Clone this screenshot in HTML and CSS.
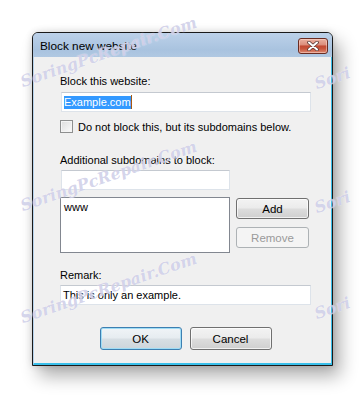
FILE: index.html
```html
<!DOCTYPE html>
<html>
<head>
<meta charset="utf-8">
<link rel="stylesheet" href="styles.css">
</head>
<body>
<div class="stage">
  <div class="window">
    <div class="titlebar">
      <span class="title">Block new website</span>
      <div class="close">
        <svg width="12" height="10" viewBox="0 0 12 10">
          <path d="M2 1.5 L10 8.5 M10 1.5 L2 8.5" stroke="#5a3a36" stroke-width="3.6" stroke-linecap="round"/>
          <path d="M2 1.5 L10 8.5 M10 1.5 L2 8.5" stroke="#ffffff" stroke-width="2" stroke-linecap="round"/>
        </svg>
      </div>
    </div>
    <div class="client">
      <div class="label l1">Block this website:</div>
      <div class="input in1"><span class="sel">Example.com</span><span class="caret"></span></div>
      <div class="checkrow">
        <span class="checkbox"></span>
        <span>Do not block this, but its subdomains below.</span>
      </div>
      <div class="label l2">Additional subdomains to block:</div>
      <div class="input in2"></div>
      <div class="listrow">
        <div class="listbox">www</div>
        <div class="sidebtns">
          <div class="btn side">Add</div>
          <div class="btn side disabled">Remove</div>
        </div>
      </div>
      <div class="label l3">Remark:</div>
      <div class="input in3">This is only an example.</div>
      <div class="footer">
        <div class="btn main default">OK</div>
        <div class="btn main">Cancel</div>
      </div>
    </div>
  </div>
  <span class="wm wm1">SoringPcRepair.Com</span>
  <span class="wm wm2">SoringPcRepair.Com</span>
  <span class="wm wm3">SoringPcRepair.Com</span>
  <span class="wm wm4">Sori</span>
  <span class="wm wm5">Sori</span>
  <span class="wm wm6">Sori</span>
</div>
</body>
</html>
```
FILE: styles.css
```css
* { box-sizing: border-box; }
html, body { margin: 0; padding: 0; background: #ffffff; }
body {
  width: 364px;
  height: 399px;
  overflow: hidden;
  font-family: "Liberation Sans", Arial, sans-serif;
  font-size: 11px;
  color: #000;
}
.stage {
  position: relative;
  width: 364px;
  height: 399px;
  padding: 32px 0 0 32px;
}
.window {
  width: 301px;
  height: 334px;
  border: 1px solid #1a1a1a;
  border-radius: 6px 6px 0 0;
  background: #b3cae4;
  box-shadow: 7px 10px 18px rgba(0,0,0,0.32), 0 0 7px rgba(0,0,0,0.15);
  display: flex;
  flex-direction: column;
  overflow: hidden;
}
.titlebar {
  height: 24px;
  flex: none;
  display: flex;
  align-items: center;
  justify-content: space-between;
  padding: 0 4px 0 7px;
  background: linear-gradient(#bcd1e9, #a9c3df 70%, #b0c8e2);
}
.title {
  font-size: 11.8px;
  color: #000;
  margin-top: 1px;
}
.close {
  width: 30px;
  height: 16px;
  margin-top: 1px;
  border: 1px solid #6a2c22;
  border-radius: 3px;
  background: linear-gradient(#eab0a0 0%, #dc8d7b 42%, #c24832 50%, #c8553c 70%, #de8d76 100%);
  box-shadow: inset 0 0 0 1px rgba(255,220,210,0.5);
  display: flex;
  align-items: center;
  justify-content: center;
}
.client {
  flex: 1;
  background: #f0f0f0;
  border-left: 1px solid #b7d3ec;
  border-right: 1px solid #39bfea;
  border-bottom: 2px solid #39bfea;
  padding: 17px 20px 0 26px;
  display: flex;
  flex-direction: column;
}
.label { line-height: 15px; height: 15px; white-space: nowrap; }
.l1 { margin-bottom: 3px; }
.l2 { margin-top: 19px; margin-bottom: 2px; }
.l3 { margin-top: 15px; margin-bottom: 2px; }
.input {
  height: 20px;
  background: #fff;
  border: 1px solid #dde3ea;
  border-top-color: #c4c9d0;
  padding: 2px 2px;
  line-height: 14px;
  white-space: nowrap;
  display: flex;
  align-items: center;
}
.in1 { margin-left: 1px; }
.in2 { width: 169px; margin-left: 1px; }
.sel { background: #3399ff; color: #fff; line-height: 13px; }
.caret { width: 1px; height: 14px; background: #a85a10; }
.checkrow {
  margin-top: 7px;
  height: 15px;
  display: flex;
  align-items: center;
  gap: 5px;
  white-space: nowrap;
}
.checkbox {
  width: 13px;
  height: 13px;
  border: 1px solid #8e8f8f;
  background: linear-gradient(135deg, #dcdcdc, #fbfbfb);
  box-shadow: inset 0 0 0 1px #f4f4f4;
}
.listrow {
  margin-top: 7px;
  display: flex;
  gap: 6px;
}
.listbox {
  width: 170px;
  height: 56px;
  background: #fff;
  border: 1px solid #828790;
  padding: 2px 3px;
  line-height: 14px;
}
.sidebtns {
  display: flex;
  flex-direction: column;
  gap: 8px;
  padding-top: 1px;
}
.btn {
  display: flex;
  align-items: center;
  justify-content: center;
  border: 1px solid #707070;
  border-radius: 3px;
  background: linear-gradient(#f3f3f3 0%, #ebebeb 48%, #dddddd 52%, #cfcfcf 100%);
  box-shadow: inset 0 0 0 1px rgba(255,255,255,0.7);
  color: #000;
  font-size: 11.5px;
}
.side { width: 73px; height: 21px; }
.disabled {
  border-color: #adb2b5;
  background: #f4f4f4;
  color: #9a9a9a;
  box-shadow: none;
}
.footer {
  margin-top: 22px;
  display: flex;
  justify-content: center;
  gap: 8px;
}
.main { width: 82px; height: 23px; }
.default {
  border-color: #3c7fb1;
  box-shadow: inset 0 0 0 1px #9fdcf5;
  background: linear-gradient(#f0f4f7 0%, #e6ecf0 48%, #d8dfe4 52%, #cdd5db 100%);
}
.wm {
  position: absolute;
  font-family: "DejaVu Serif", serif;
  font-style: italic;
  font-weight: bold;
  font-size: 16px;
  color: rgba(160,160,210,0.45);
  text-shadow: 0 0 1px rgba(255,255,255,0.9);
  transform: rotate(-19deg);
  transform-origin: 0 100%;
  white-space: nowrap;
  pointer-events: none;
}
.wm1 { left: 24px; top: 72px; }
.wm2 { left: 24px; top: 196px; }
.wm3 { left: 24px; top: 308px; }
.wm4 { left: 318px; top: 74px; }
.wm5 { left: 318px; top: 198px; }
.wm6 { left: 318px; top: 304px; }
```
